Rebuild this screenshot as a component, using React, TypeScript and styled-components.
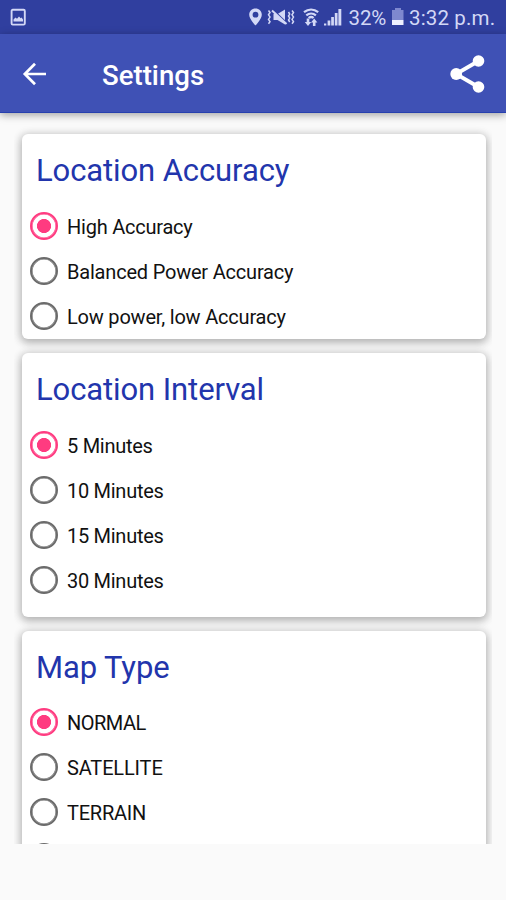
import React, { useState } from "react";
import styled, { createGlobalStyle } from "styled-components";

const GlobalStyle = createGlobalStyle`
  * { box-sizing: border-box; }
  body { margin: 0; background: #fafafa; font-family: Roboto, sans-serif; }
`;

const Screen = styled.div`
  display: flex;
  flex-direction: column;
  height: 900px;
  overflow: hidden;
  background: #fafafa;
`;

const StatusBar = styled.div`
  display: flex;
  align-items: center;
  flex: 0 0 34px;
  padding: 0 9px 0 9px;
  background: #303f9f;
  color: #d3d8f6;
  font-size: 20.5px;
  white-space: nowrap;
`;

const StatusIcons = styled.svg`
  display: block;
  flex: none;
`;

const Spacer = styled.div`
  flex: 1;
`;

const StatusText = styled.span<{ $width: number; $spacing?: number }>`
  width: ${(p) => p.$width}px;
  letter-spacing: ${(p) => p.$spacing ?? 0}px;
  line-height: 32px;
  padding-top: 2px;
`;

const AppBar = styled.header`
  display: flex;
  align-items: center;
  flex: 0 0 79px;
  padding: 2px 20px 0 22px;
  background: #3f51b5;
  border-bottom: 1px solid #2740ae;
  box-shadow: 0 2px 8px rgba(0, 0, 0, 0.36);
  z-index: 1;
`;

const IconButton = styled.button`
  display: flex;
  padding: 0;
  border: 0;
  background: none;
  color: #fff;
`;

const AppTitle = styled.h1`
  flex: 1;
  margin: 4px 0 0 55px;
  color: #fff;
  font-size: 27.6px;
  font-weight: 500;
  line-height: 36px;
`;

const CardList = styled.main`
  display: flex;
  flex-direction: column;
  gap: 14px;
  flex: 0 0 731px;
  margin: 0 14px;
  padding: 21px 6px 0 7.5px;
  overflow: hidden;
`;

const Card = styled.section<{ $height: number }>`
  flex: 0 0 ${(p) => p.$height}px;
  padding-top: 18px;
  border-radius: 6px;
  background: #fff;
  box-shadow: 0 3px 9px 1px rgba(0, 0, 0, 0.22), 0 1px 9px 2px rgba(0, 0, 0, 0.1);
`;

const CardTitle = styled.h2`
  margin: 0 0 13px 14.5px;
  color: #2235ac;
  font-size: 31px;
  font-weight: 400;
  line-height: 38px;
  letter-spacing: -0.1px;
`;

const Option = styled.label`
  display: flex;
  align-items: center;
  height: 45px;
  padding-left: 8.5px;
  color: #111;
  font-size: 20px;
`;

const Radio = styled.input`
  appearance: none;
  flex: none;
  width: 28px;
  height: 28px;
  margin: 0 9px 0 0;
  border: 2px solid #6b6b6b;
  border-radius: 50%;
  box-shadow: inset 0 0 0 0.6px #6b6b6b;

  &:checked {
    border-color: #ff3b80;
    box-shadow: inset 0 0 0 0.6px #ff3b80;
    background: radial-gradient(circle, #ff3b80 6.7px, transparent 7.4px);
  }
`;

const OptionText = styled.span<{ $spacing: number }>`
  padding-top: 2px;
  letter-spacing: ${(p) => p.$spacing}px;
`;

type Item = { label: string; spacing: number };
type Group = { title: string; height: number; items: Item[] };

const groups: Group[] = [
  {
    title: "Location Accuracy",
    height: 205,
    items: [
      { label: "High Accuracy", spacing: -0.23 },
      { label: "Balanced Power Accuracy", spacing: -0.2 },
      { label: "Low power, low Accuracy", spacing: -0.2 },
    ],
  },
  {
    title: "Location Interval",
    height: 263.5,
    items: [
      { label: "5 Minutes", spacing: -0.28 },
      { label: "10 Minutes", spacing: -0.28 },
      { label: "15 Minutes", spacing: -0.28 },
      { label: "30 Minutes", spacing: -0.28 },
    ],
  },
  {
    title: "Map Type",
    height: 263.5,
    items: [
      { label: "NORMAL", spacing: -0.5 },
      { label: "SATELLITE", spacing: -0.15 },
      { label: "TERRAIN", spacing: -0.25 },
      { label: "", spacing: 0 },
    ],
  },
];

function OptionCard({ group }: { group: Group }) {
  const [selected, setSelected] = useState(0);
  return (
    <Card $height={group.height}>
      <CardTitle>{group.title}</CardTitle>
      {group.items.map((item, i) => (
        <Option key={i}>
          <Radio
            type="radio"
            name={group.title}
            checked={selected === i}
            onChange={() => setSelected(i)}
          />
          <OptionText $spacing={item.spacing}>{item.label}</OptionText>
        </Option>
      ))}
    </Card>
  );
}

function PictureIcon() {
  return (
    <StatusIcons width="18" height="18" viewBox="0 0 18 18">
      <rect x="2.600" y="1.800" width="13.200" height="14.800" rx="1.200" fill="none" stroke="#d3d8f6" strokeWidth="1.900" />
      <path d="M4.500 13.500V11.500l2-2 1.500 1.300L10 8.500l1.600 1.800 1-0.800 1.400 2v2z" fill="#d3d8f6" />
    </StatusIcons>
  );
}

function SystemIcons() {
  return (
    <StatusIcons width="101" height="22" viewBox="0 0 101 22">
      <g fill="#d3d8f6">
        <path fillRule="evenodd" d="M7.500 2.500C3.900 2.500 1.200 5.200 1.200 8.700 1.200 13 7.500 19.500 7.500 19.500S13.800 13 13.800 8.700C13.800 5.200 11.100 2.500 7.500 2.500zm0 3.300a2.900 2.900 0 1 1 0 5.800 2.900 2.900 0 0 1 0-5.800z" />
        <path d="M25.500 8h4l7.500-4.500v15L29.500 14h-4z" />
      </g>
      <g fill="none" stroke="#d3d8f6" strokeWidth="1.500">
        <path d="M20.500 4.500l1.500 2-1.500 2.300 1.500 2.300-1.500 2.300 1.500 2.300-1.500 2M40.500 6l1.200 2-1.200 2 1.200 2-1.200 2 1.200 2M44 4.500l1.500 2-1.500 2.300 1.500 2.300-1.500 2.300 1.500 2.300-1.500 2" />
        <path d="M25.500 4.500l13.500 13" stroke="#303f9f" strokeWidth="1.800" />
        <path d="M24 4.500l14.500 13.500" strokeWidth="2" />
        <path d="M56 6.200c4.300-3.500 9.900-3.500 14.200 0M58.300 9.300c2.800-2.300 6.800-2.300 9.600 0M60.600 12c1.500-1.200 3.500-1.200 5 0" strokeWidth="2.200" />
      </g>
      <g fill="#d3d8f6">
        <path d="M60 20l-3.200-4h1.900v-3.500h2.600V16h1.900z M66.200 12.500l3.200 4h-1.900V20h-2.600v-3.500H63z" />
        <rect x="76" y="17.500" width="2.300" height="2" />
        <rect x="79.600" y="14.500" width="2.700" height="5" />
        <rect x="83.200" y="11" width="2.700" height="8.500" />
        <rect x="86.800" y="7" width="2.700" height="12.500" />
        <rect x="90.400" y="3" width="2.900" height="16.500" />
      </g>
    </StatusIcons>
  );
}

function BatteryIcon() {
  return (
    <StatusIcons width="19.5" height="20" viewBox="0 0 19.500 20">
      <path d="M2 3h3V1h6v2h2.500v10H2z" fill="#7e88cf" />
      <path d="M2 13h11.500v5H2z" fill="#eef0ff" />
    </StatusIcons>
  );
}

export default function App() {
  return (
    <>
      <GlobalStyle />
      <Screen>
        <StatusBar>
          <PictureIcon />
          <Spacer />
          <SystemIcons />
          <StatusText $width={41} $spacing={-0.1}>32%</StatusText>
          <BatteryIcon />
          <StatusText $width={88} $spacing={0.15}>3:32 p.m.</StatusText>
        </StatusBar>
        <AppBar>
          <IconButton aria-label="Back">
            <svg width="25" height="24" viewBox="0 0 25 24" fill="none" stroke="currentColor" strokeWidth="2.700">
              <path d="M24 12H3M13 1.800L2.800 12 13 22.200" />
            </svg>
          </IconButton>
          <AppTitle>Settings</AppTitle>
          <IconButton aria-label="Share">
            <svg width="36" height="38" viewBox="0 0 36 38" fill="currentColor">
              <path d="M28.500 6L6 19l22.500 13" fill="none" stroke="currentColor" strokeWidth="3.800" />
              <circle cx="28.500" cy="6" r="5.800" />
              <circle cx="6.200" cy="19" r="5.900" />
              <circle cx="28.500" cy="32" r="5.800" />
            </svg>
          </IconButton>
        </AppBar>
        <CardList>
          {groups.map((group) => (
            <OptionCard key={group.title} group={group} />
          ))}
        </CardList>
      </Screen>
    </>
  );
}
